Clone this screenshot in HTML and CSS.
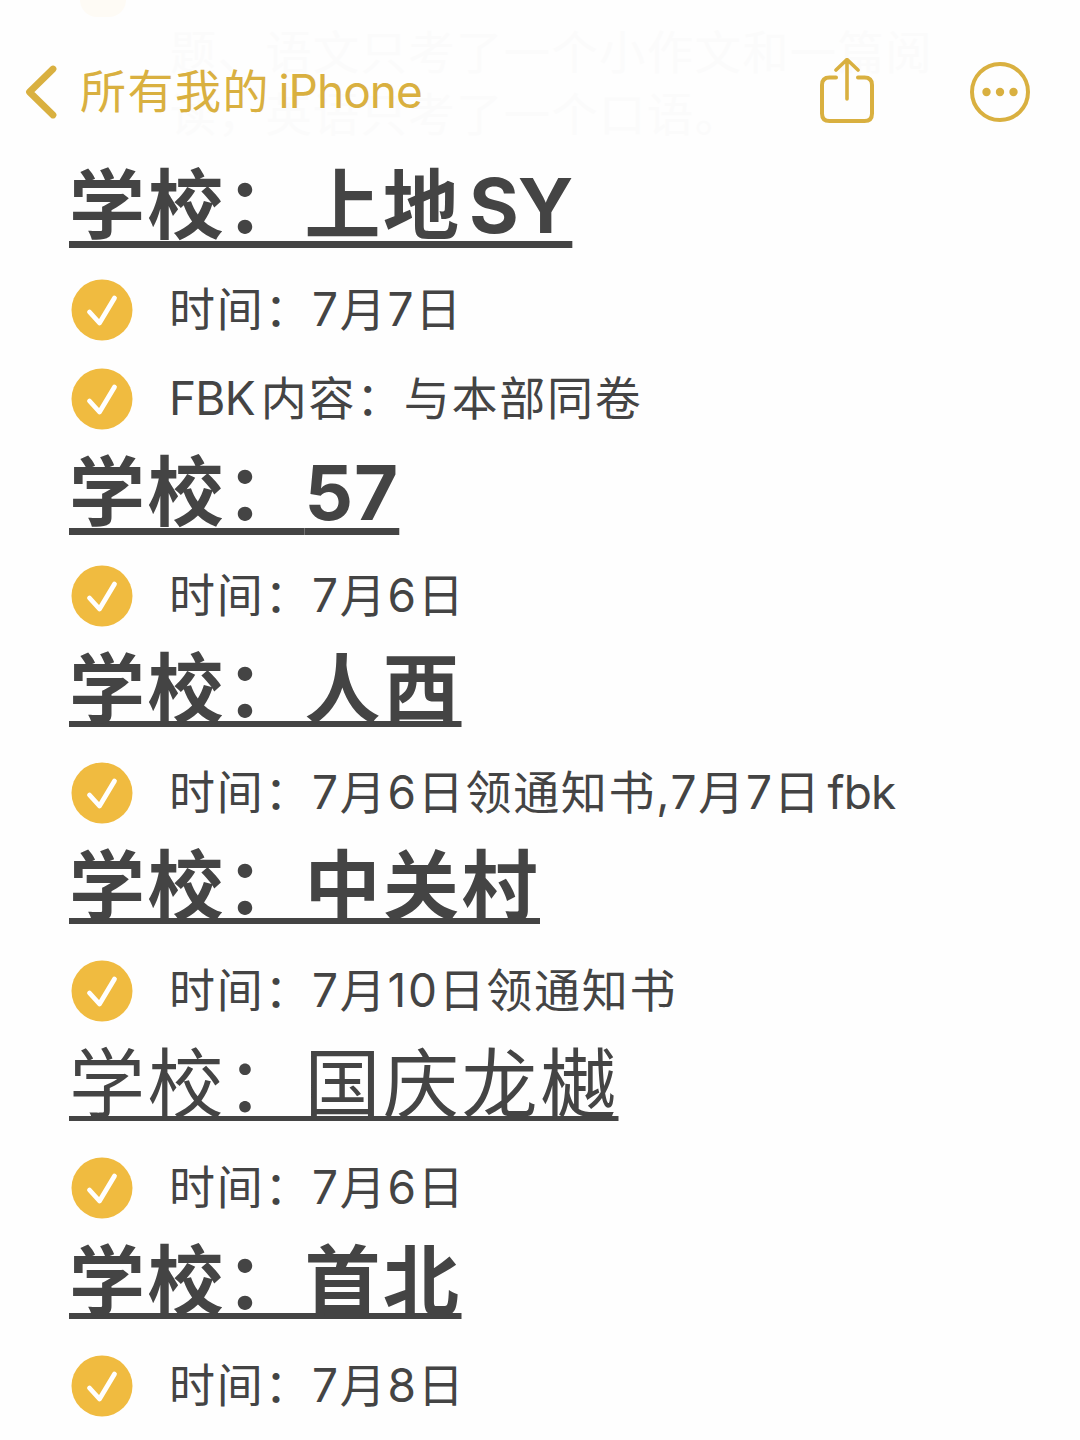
FILE: index.html
```html
<!DOCTYPE html>
<html lang="zh-CN">
<head>
    <meta charset="UTF-8">
    <meta name="viewport" content="width=device-width, initial-scale=1.0">
    <title>备忘录</title>
    <link rel="stylesheet" href="styles.css">
</head>
<body>
    <svg class="sprite" aria-hidden="true">
        <symbol id="check" viewBox="0 0 62 62">
            <circle cx="31" cy="31" r="30.5" fill="#f0bb40"/>
            <path d="M18.500 33L28.500 44L43.500 19" fill="none" stroke="#fff" stroke-width="4.800" stroke-linecap="round" stroke-linejoin="round"/>
        </symbol>
    </svg>

    <!-- Note text scrolled under the navigation bar -->
    <div class="underlay" aria-hidden="true">
        <p>题、语文只考了一个小作文和一篇阅</p>
        <p>读，英语只考了一个口语。</p>
    </div>

    <header class="navbar">
        <a class="back" href="#">
            <svg width="34" height="56" viewBox="0 0 34 56">
                <path d="M29 5L5.500 28L29 51" fill="none" stroke="currentColor" stroke-width="6.800" stroke-linecap="round" stroke-linejoin="round"/>
            </svg>
            <span class="title">所有我的 <span class="device">iPhone</span></span>
        </a>
        <div class="actions">
            <svg width="54" height="68" viewBox="0 0 54 68" fill="none" stroke="currentColor" stroke-width="4" stroke-linecap="round">
                <path d="M16 19.500H9.500Q2 19.500 2 27V55.500Q2 63 9.500 63H44.500Q52 63 52 55.500V27Q52 19.500 44.500 19.500H38"/>
                <path d="M27 41V2M16 12L27 1.500L38 12" stroke-width="3.600"/>
            </svg>
            <svg width="60" height="60" viewBox="0 0 60 60">
                <circle cx="30" cy="30" r="28" fill="none" stroke="currentColor" stroke-width="4"/>
                <g fill="currentColor">
                    <circle cx="16.500" cy="30" r="4.200"/>
                    <circle cx="30" cy="30" r="4.200"/>
                    <circle cx="43.500" cy="30" r="4.200"/>
                </g>
            </svg>
        </div>
    </header>

    <main class="note">
        <section>
            <h2>学校：上<span class="wide">地</span><span class="latin">SY</span></h2>
            <ul>
                <li><svg class="check"><use href="#check"/></svg><span class="item">时间：7月7日</span></li>
                <li><svg class="check"><use href="#check"/></svg><span class="item"><span class="word">FBK</span><span class="gap"></span>内容：与本部同卷</span></li>
            </ul>
        </section>
        <section>
            <h2>学校：<span class="number">57</span></h2>
            <ul>
                <li><svg class="check"><use href="#check"/></svg><span class="item">时间：7月6日</span></li>
            </ul>
        </section>
        <section>
            <h2 class="cjk">学校：人西</h2>
            <ul>
                <li><svg class="check"><use href="#check"/></svg><span class="item">时间：7月6日领通知书,7月7日<span class="gap"></span><span class="word">fbk</span></span></li>
            </ul>
        </section>
        <section>
            <h2 class="cjk">学校：中关村</h2>
            <ul>
                <li><svg class="check"><use href="#check"/></svg><span class="item">时间：7月10日领通知书</span></li>
            </ul>
        </section>
        <section>
            <h2 class="cjk regular">学校：国庆龙樾</h2>
            <ul>
                <li><svg class="check"><use href="#check"/></svg><span class="item">时间：7月6日</span></li>
            </ul>
        </section>
        <section>
            <h2 class="cjk">学校：首北</h2>
            <ul>
                <li><svg class="check"><use href="#check"/></svg><span class="item">时间：7月8日</span></li>
            </ul>
        </section>
    </main>
</body>
</html>
```
FILE: styles.css
```css
* {
    margin: 0;
    padding: 0;
    box-sizing: border-box;
}

body {
    width: 1080px;
    height: 1440px;
    overflow: hidden;
    position: relative;
    background: #fefefe;
    color: #444;
    font-family: Inter, "Noto Sans CJK SC", sans-serif;
}

.sprite {
    position: absolute;
    width: 0;
    height: 0;
}

.underlay {
    position: absolute;
    top: 21px;
    left: 170px;
    color: #fbfbfb;
    font-size: 46px;
    line-height: 62px;
    letter-spacing: 1.7px;
    white-space: nowrap;
}

/* bottom edge of the checkbox above the visible lines */
.underlay::before {
    content: "";
    position: absolute;
    top: -21px;
    left: -90px;
    width: 46px;
    height: 17px;
    border-radius: 0 0 20px 20px;
    background: #fefbf5;
}

.navbar {
    position: relative;
    display: flex;
    align-items: center;
    justify-content: space-between;
    height: 151px;
    padding: 32px 50px 0 24px;
    color: #d9b040;
}

.back {
    display: flex;
    align-items: center;
    gap: 22px;
    color: inherit;
    font-size: 46px;
    letter-spacing: 1.5px;
    text-decoration: none;
}

.title {
    padding-bottom: 7px;
}

.device {
    margin-left: -6px;
    letter-spacing: -1px;
}

.actions {
    display: flex;
    align-items: center;
    gap: 96px;
}

.note {
    padding: 0 69px;
}

section {
    height: 197.4px;
}

section:first-child {
    height: 286.5px;
}

h2 {
    height: 114px;
    font-size: 76px;
    font-weight: 700;
    line-height: 109px;
    letter-spacing: 2.5px;
    white-space: nowrap;
    text-decoration: underline;
    text-decoration-thickness: 7px;
    text-decoration-skip-ink: none;
    text-underline-offset: 8px;
}

h2.cjk {
    text-decoration-thickness: 6px;
    text-underline-offset: 4px;
}

h2.regular {
    font-weight: 400;
    text-decoration-thickness: 5px;
}

.wide {
    letter-spacing: 10px;
}

.latin {
    letter-spacing: -1px;
}

.number {
    letter-spacing: 1px;
}

ul {
    list-style: none;
    padding-left: 2px;
}

li {
    display: flex;
    align-items: center;
    height: 89px;
    font-size: 46px;
    letter-spacing: 1.7px;
    white-space: nowrap;
}

.check {
    width: 62px;
    height: 62px;
    margin-right: 36px;
}

.item {
    padding-bottom: 8px;
}

.word {
    letter-spacing: -0.8px;
}

.gap {
    display: inline-block;
    width: 6px;
}
```
